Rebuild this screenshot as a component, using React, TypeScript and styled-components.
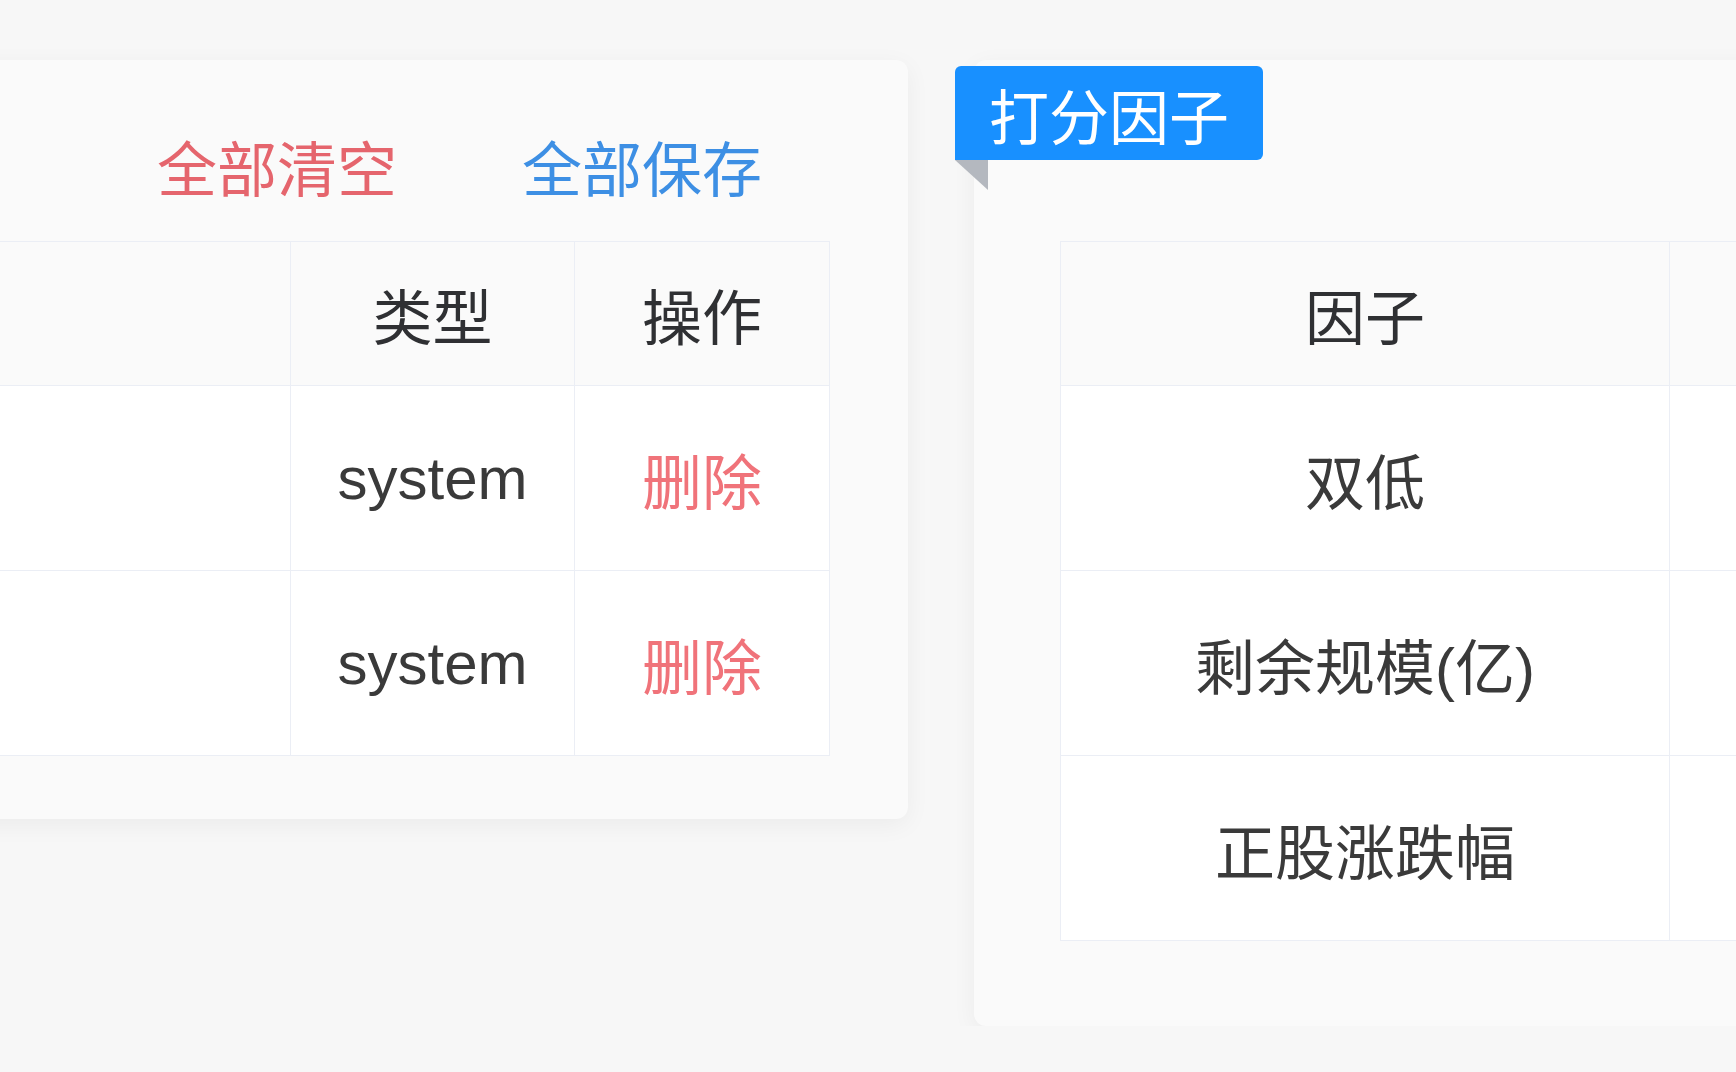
import styled, { createGlobalStyle } from 'styled-components';

const GlobalStyle = createGlobalStyle`
  html, body {
    margin: 0;
    padding: 0;
    background: #f7f7f7;
    overflow: hidden;
  }
  body {
    font-family: 'Liberation Sans', 'Noto Sans CJK SC', sans-serif;
    color: #333;
  }
`;

const Page = styled.div`
  display: flex;
  align-items: flex-start;
  gap: 66px;
  padding-top: 60px;
  width: 2200px;
`;

const Card = styled.section<{ padTop: number; padBottom: number; padLeft: number; padRight: number }>`
  position: relative;
  background: #fafafa;
  border-radius: 12px;
  box-shadow: 0 6px 24px rgba(0, 0, 0, 0.05);
  padding: ${(p) => `${p.padTop}px ${p.padRight}px ${p.padBottom}px ${p.padLeft}px`};
`;

const LeftCard = styled(Card)`
  margin-left: -96px;
`;

const Toolbar = styled.div`
  display: flex;
  justify-content: flex-end;
  gap: 125px;
  padding-right: 68px;
  margin-bottom: 33px;
`;

const TextButton = styled.button<{ tone: 'danger' | 'primary' }>`
  background: none;
  border: none;
  padding: 0;
  font-family: inherit;
  font-size: 60px;
  line-height: 72px;
  cursor: pointer;
  color: ${(p) => (p.tone === 'danger' ? '#e5656d' : '#3d8fe4')};
`;

const Table = styled.table`
  border-collapse: collapse;
  table-layout: fixed;
  background: #fff;
  font-size: 60px;
`;

const HeadCell = styled.th<{ w: number }>`
  width: ${(p) => p.w}px;
  height: 143px;
  padding: 0;
  background: #fafafa;
  border: 1px solid #ebeef5;
  font-weight: normal;
  color: #2f3033;
  text-align: center;
`;

const Cell = styled.td`
  height: 184px;
  padding: 0;
  border: 1px solid #ebeef5;
  text-align: center;
  color: #3a3a3a;
`;

const DangerLink = styled.span`
  color: #f0737a;
  cursor: pointer;
`;

const Ribbon = styled.div`
  position: absolute;
  top: 6px;
  left: -19px;
  height: 94px;
  padding: 0 34px;
  display: flex;
  align-items: center;
  background: #1890ff;
  color: #fff;
  font-size: 60px;
  border-radius: 6px 6px 6px 0;

  &::after {
    content: '';
    position: absolute;
    left: 0;
    top: 94px;
    width: 0;
    height: 0;
    border-top: 30px solid #b4b8bf;
    border-left: 33px solid transparent;
  }
`;

const leftRows = [
  { type: 'system' },
  { type: 'system' },
];

const factors = ['双低', '剩余规模(亿)', '正股涨跌幅'];

export default function App() {
  return (
    <>
      <GlobalStyle />
      <Page>
        <LeftCard padTop={76} padBottom={63} padLeft={40} padRight={78}>
          <Toolbar>
            <TextButton tone="danger">全部清空</TextButton>
            <TextButton tone="primary">全部保存</TextButton>
          </Toolbar>
          <Table>
            <thead>
              <tr>
                <HeadCell w={345} />
                <HeadCell w={283}>类型</HeadCell>
                <HeadCell w={254}>操作</HeadCell>
              </tr>
            </thead>
            <tbody>
              {leftRows.map((row, idx) => (
                <tr key={idx}>
                  <Cell />
                  <Cell>{row.type}</Cell>
                  <Cell>
                    <DangerLink>删除</DangerLink>
                  </Cell>
                </tr>
              ))}
            </tbody>
          </Table>
        </LeftCard>

        <Card padTop={181} padBottom={85} padLeft={86} padRight={60}>
          <Ribbon>打分因子</Ribbon>
          <Table>
            <thead>
              <tr>
                <HeadCell w={608}>因子</HeadCell>
                <HeadCell w={400} />
              </tr>
            </thead>
            <tbody>
              {factors.map((name) => (
                <tr key={name}>
                  <Cell>{name}</Cell>
                  <Cell />
                </tr>
              ))}
            </tbody>
          </Table>
        </Card>
      </Page>
    </>
  );
}
